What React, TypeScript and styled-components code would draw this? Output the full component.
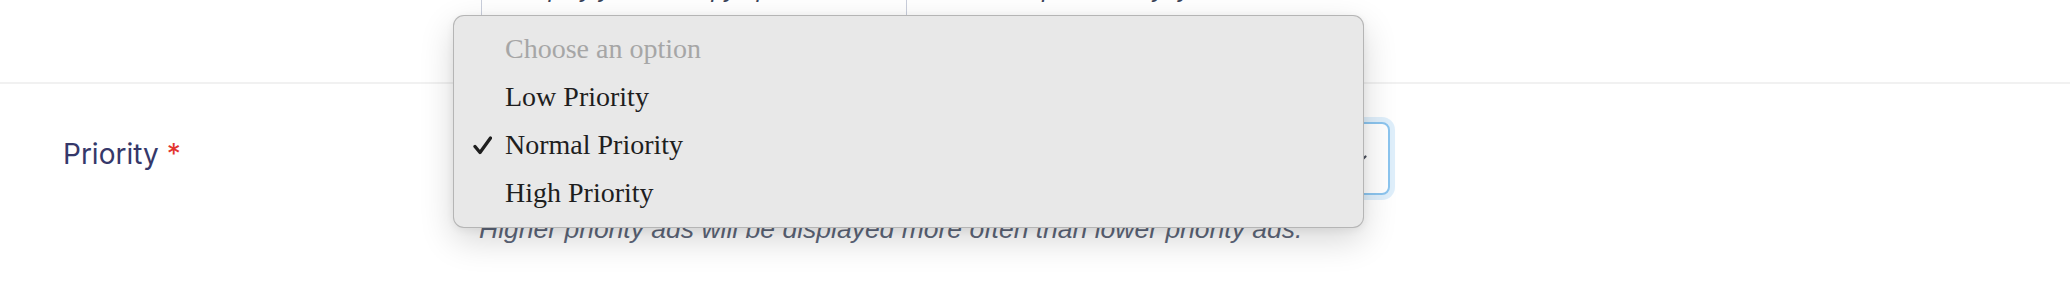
import React from "react";
import styled, { createGlobalStyle } from "styled-components";

const GlobalStyle = createGlobalStyle`
  html, body {
    margin: 0;
    padding: 0;
    background: #ffffff;
  }
  body {
    font-family: Inter, "Liberation Sans", sans-serif;
  }
`;

const Page = styled.div`
  width: 2070px;
  height: 286px;
  overflow: hidden;
  background: #ffffff;
`;

const TopSection = styled.section`
  height: 82px;
  display: grid;
  grid-template-columns: 481px 1fr;
`;

const TableClip = styled.div`
  height: 40px;
  overflow: hidden;
`;

const HintTable = styled.div`
  display: grid;
  grid-template-columns: 425px 454px;
  margin-top: -47px;
`;

const HintCell = styled.div<{ $pad: number }>`
  height: 87px;
  box-sizing: border-box;
  border-left: 1px solid #c9cedb;
  padding: 20px 0 0 ${(p) => p.$pad}px;
  font: italic 24px/32px "Liberation Sans", Arial, sans-serif;
  color: #3a4358;
  white-space: nowrap;
`;

const Divider = styled.hr`
  margin: 0;
  border: 0;
  height: 2px;
  background: #f1f1f1;
`;

const FieldRow = styled.section`
  display: grid;
  grid-template-columns: 479px 911px;
  padding-top: 38px;
`;

const Label = styled.label`
  height: 73px;
  box-sizing: border-box;
  padding-bottom: 10px;
  display: flex;
  align-items: center;
  padding-left: 63px;
  font: 400 28px/34px Inter, "Open Sans", sans-serif;
  color: #35386a;
`;

const Required = styled.span`
  color: #e3342f;
  margin-left: 8px;
`;

const Field = styled.div`
  display: flex;
  flex-direction: column;
`;

const SelectWrap = styled.div`
  position: relative;
`;

const SelectBox = styled.div`
  height: 73px;
  box-sizing: border-box;
  border: 2px solid #8cc5ef;
  border-radius: 8px;
  box-shadow: 0 0 0 5px rgba(140, 197, 239, 0.28);
  background: #ffffff;
  display: flex;
  align-items: center;
  justify-content: flex-end;
  padding-right: 21px;
`;

const Chevron = styled.svg`
  width: 13px;
  height: 8px;
  color: #4a4f5c;
`;

const Helper = styled.p`
  margin: 19px 0 0;
  font: italic 26.5px/31px "Liberation Sans", Arial, sans-serif;
  color: #5d6679;
  white-space: nowrap;
`;

const Menu = styled.ul`
  position: absolute;
  left: -26px;
  top: -107px;
  width: 911px;
  box-sizing: border-box;
  margin: 0;
  padding: 9px 0 10px;
  list-style: none;
  background: #e8e8e8;
  border: 1px solid rgba(0, 0, 0, 0.22);
  border-radius: 11px;
  box-shadow: 0 12px 34px rgba(0, 0, 0, 0.16), 0 2px 8px rgba(0, 0, 0, 0.06);
  z-index: 10;
`;

const Option = styled.li<{ $placeholder?: boolean }>`
  height: 48px;
  display: grid;
  grid-template-columns: 51px 1fr;
  align-items: center;
  font: 28px/48px "Liberation Serif", "Times New Roman", serif;
  color: ${(p) => (p.$placeholder ? "#a6a6a6" : "#1e1e1e")};
  white-space: nowrap;
`;

const CheckMark = styled.svg`
  width: 19px;
  height: 19px;
  margin-left: 19px;
  color: #1e1e1e;
`;

const options = [
  { label: "Choose an option", placeholder: true },
  { label: "Low Priority" },
  { label: "Normal Priority", selected: true },
  { label: "High Priority" },
];

export default function App() {
  return (
    <Page>
      <GlobalStyle />
      <TopSection>
        <div />
        <TableClip>
          <HintTable>
            <HintCell $pad={32}>Display your ad copy / preview text here</HintCell>
            <HintCell $pad={74}>Example: ad_key_y</HintCell>
          </HintTable>
        </TableClip>
      </TopSection>
      <Divider />
      <FieldRow>
        <Label>
          Priority<Required>*</Required>
        </Label>
        <Field>
          <SelectWrap>
            <SelectBox>
              <Chevron viewBox="0 0 13 8" fill="none">
                <path d="M1.5 1.5 L6.5 6.5 L11.5 1.5" stroke="currentColor" strokeWidth="2.2" strokeLinecap="round" strokeLinejoin="round" />
              </Chevron>
            </SelectBox>
            <Menu role="listbox">
              {options.map((o) => (
                <Option key={o.label} $placeholder={o.placeholder} role="option" aria-selected={!!o.selected}>
                  {o.selected ? (
                    <CheckMark viewBox="0 0 19 19" fill="none">
                      <path d="M2 10.5 L7 16.5 L17.5 2" stroke="currentColor" strokeWidth="3.3" strokeLinecap="round" strokeLinejoin="round" />
                    </CheckMark>
                  ) : (
                    <span />
                  )}
                  <span>{o.label}</span>
                </Option>
              ))}
            </Menu>
          </SelectWrap>
          <Helper>Higher priority ads will be displayed more often than lower priority ads.</Helper>
        </Field>
      </FieldRow>
    </Page>
  );
}
